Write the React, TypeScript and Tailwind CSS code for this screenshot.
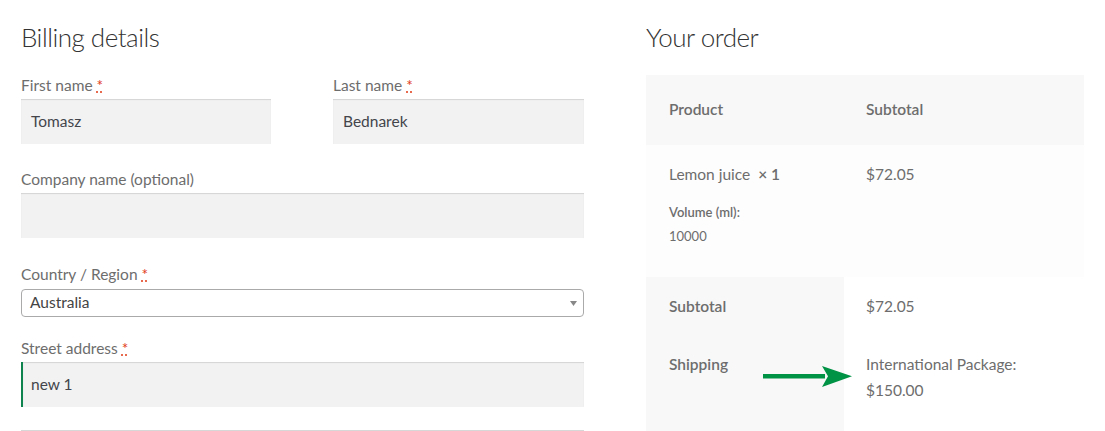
import React from "react";

function Req() {
  return (
    <abbr title="required" className="text-[#e2401c] underline decoration-dotted">
      *
    </abbr>
  );
}

function Label({ children, req }: { children: React.ReactNode; req?: boolean }) {
  return (
    <div className="text-[15.5px] leading-[20px] text-[#6d6d6d] mb-[4px]">
      {children}
      {req ? <>&nbsp;<Req /></> : null}
    </div>
  );
}

function Input({ value, focus }: { value?: string; focus?: boolean }) {
  return (
    <div
      className={
        "h-[45px] bg-[#f2f2f2] shadow-[inset_0_1px_1px_rgba(0,0,0,0.125)] flex items-center text-[15.5px] text-[#43454b] " +
        (focus ? "border-l-2 border-[#0f834d] pl-[8px]" : "pl-[10px]")
      }
    >
      {value}
    </div>
  );
}

export default function App() {
  return (
    <div className="relative w-[1105px] h-[431px] overflow-hidden bg-white font-[Lato,sans-serif] text-[#6d6d6d]">
      <div className="flex pl-[21px] gap-[62px]">
        {/* Billing */}
        <div className="w-[563px] pt-[20px]">
          <h3 className="text-[26px] leading-[34px] font-light tracking-[-0.5px] text-[#333333]">Billing details</h3>
          <div className="mt-[21px] flex gap-[62px]">
            <div className="w-[250px]">
              <Label req>First name</Label>
              <Input value="Tomasz" />
            </div>
            <div className="w-[251px]">
              <Label req>Last name</Label>
              <Input value="Bednarek" />
            </div>
          </div>
          <div className="mt-[25px]">
            <Label>Company name (optional)</Label>
            <Input />
          </div>
          <div className="mt-[26px]">
            <div className="text-[15.5px] leading-[20px] mb-[5px]">
              Country / Region&nbsp;<Req />
            </div>
            <div className="h-[28px] border border-[#aaaaaa] rounded-[4px] flex items-center justify-between pl-[8px] pr-[6px] text-[15.5px] text-[#444444]">
              <span>Australia</span>
              <svg width="7" height="5" viewBox="0 0 7 5">
                <polygon points="0,0 7,0 3.5,5" fill="#888888" />
              </svg>
            </div>
          </div>
          <div className="mt-[21px]">
            <Label req>Street address</Label>
            <Input value="new 1" focus />
          </div>
          <div className="mt-[23px]">
            <Input />
          </div>
        </div>

        {/* Order */}
        <div className="w-[438px] pt-[20px]">
          <h3 className="text-[26px] leading-[34px] font-light tracking-[-0.5px] text-[#333333]">Your order</h3>
          <div className="mt-[21px] text-[15.5px]">
            <div className="flex h-[70px] items-center bg-[#f8f8f8] font-semibold">
              <div className="w-[198px] pl-[23px]">Product</div>
              <div className="pl-[22px]">Subtotal</div>
            </div>
            <div className="flex h-[132px] bg-[#fdfdfd]">
              <div className="w-[198px] pl-[23px] pt-[16px]">
                <div className="leading-[26px]">
                  Lemon juice&nbsp;&nbsp;<strong className="font-semibold">×&nbsp;1</strong>
                </div>
                <dl className="mt-[14px] text-[13px] leading-[23.5px]">
                  <dt className="font-semibold">Volume (ml):</dt>
                  <dd>10000</dd>
                </dl>
              </div>
              <div className="pl-[22px] pt-[16px] leading-[26px]">$72.05</div>
            </div>
            <div className="flex">
              <div className="w-[198px] bg-[#f8f8f8] pl-[23px] py-[16px] leading-[26px] font-semibold">Subtotal</div>
              <div className="flex-1 pl-[22px] py-[16px] leading-[26px]">$72.05</div>
            </div>
            <div className="flex">
              <div className="w-[198px] bg-[#f8f8f8] pl-[23px] py-[16px] leading-[26px] font-semibold">Shipping</div>
              <div className="flex-1 pl-[22px] py-[16px] leading-[26px]">
                <div>International Package:</div>
                <div>$150.00</div>
              </div>
            </div>
            <div className="flex h-[40px]">
              <div className="w-[198px] bg-[#f8f8f8]" />
              <div className="flex-1" />
            </div>
          </div>
        </div>
      </div>

      {/* annotation arrow */}
      <svg
        className="absolute left-[762px] top-[366px]"
        width="91"
        height="22"
        viewBox="0 0 91 22"
      >
        <rect x="1" y="8" width="62" height="4.5" fill="#009245" />
        <polygon points="60,0 90,10.3 60,21 66,10.3" fill="#009245" />
      </svg>
    </div>
  );
}
